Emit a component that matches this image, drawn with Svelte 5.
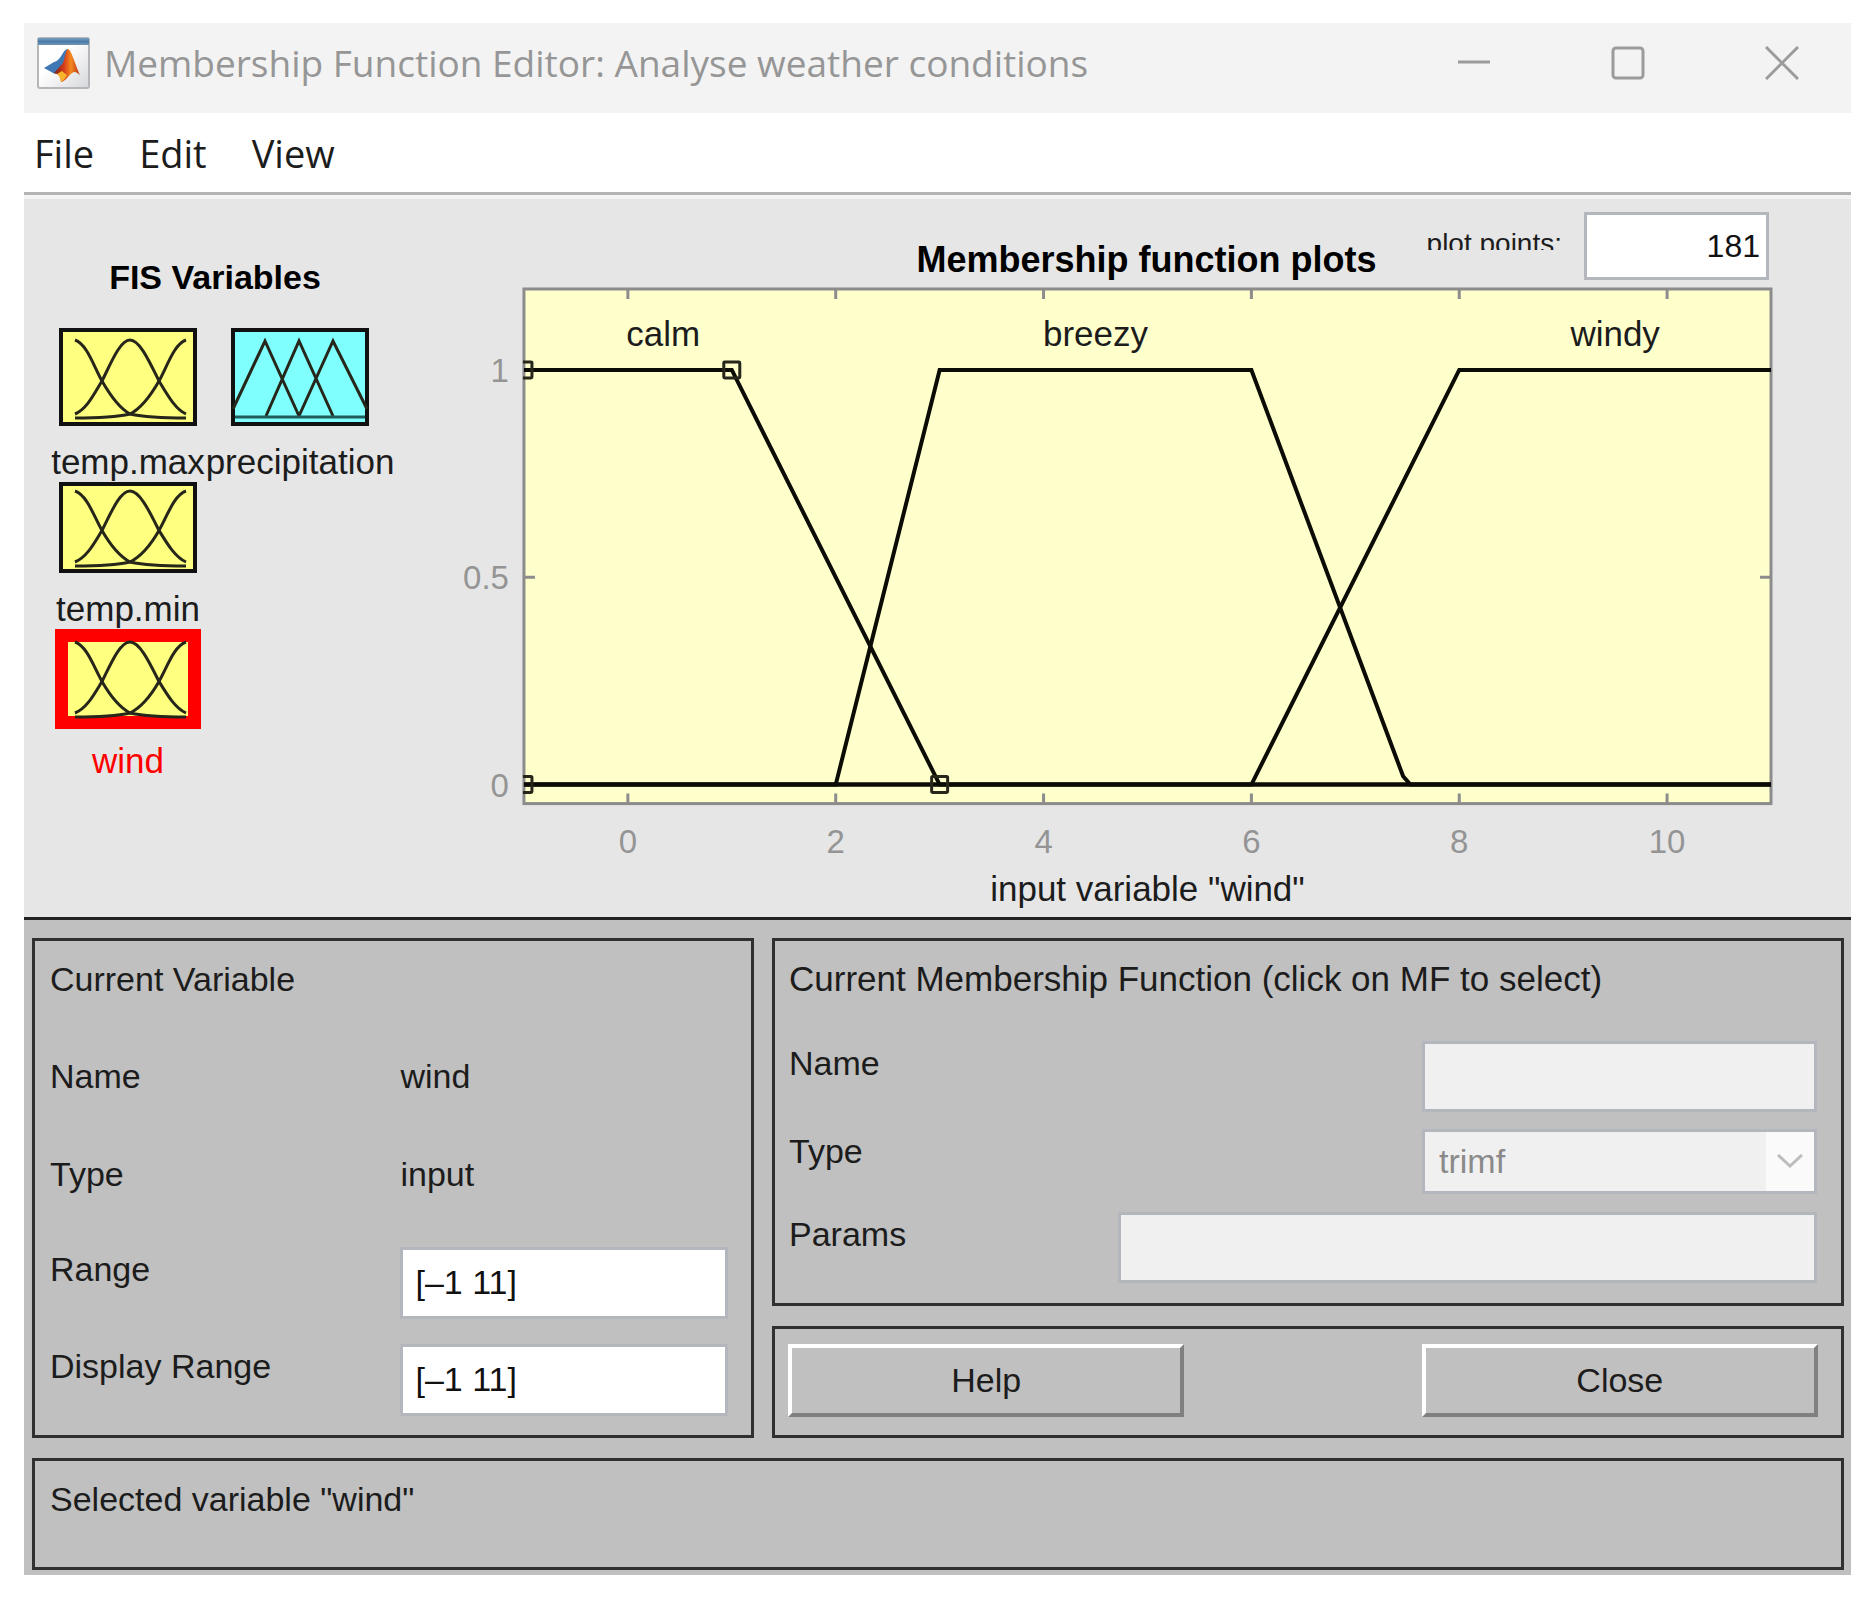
<script>
  const unit = 104;
  const left = 74;
  const px = (v) => left + unit * (v + 1);
  const py = (v) => 505 - 415 * v;
  const toPoints = (list) => list.map(([x, y]) => `${px(x)},${py(y)}`).join(' ');

  const functions = [
    { name: 'calm', at: 0.34, points: [[-1, 1], [1, 1], [3, 0], [11, 0]] },
    { name: 'breezy', at: 4.5, points: [[-1, 0], [2, 0], [3, 1], [6, 1], [7.46, 0.02], [7.53, 0], [11, 0]] },
    { name: 'windy', at: 9.5, points: [[-1, 0], [6, 0], [8, 1], [11, 1]] },
  ];
  const handles = [[-1, 1], [1, 1], [-1, 0], [3, 0]];
  const xTicks = [0, 2, 4, 6, 8, 10];
  const yTicks = [0, 0.5, 1];

  let plotPoints = $state('181');
  let range = $state('[–1 11]');
  let displayRange = $state('[–1 11]');
</script>

{#snippet bells(top, bottom)}
  {@const mid = (top + bottom) / 2 + 4}
  <g class="curve">
    <path d="M16 {top} C28 {top + 4} 35 {mid - 14} 43 {mid} S60 {bottom - 6} 71 {bottom} Q90 {bottom + 4} 127 {bottom + 4}" />
    <path d="M127 {top} C115 {top + 4} 108 {mid - 14} 100 {mid} S83 {bottom - 6} 71 {bottom} Q53 {bottom + 4} 16 {bottom + 4}" />
    <path d="M16 {bottom} C28 {bottom - 5} 35 {mid + 13} 43 {mid} C52 {mid - 18} 61 {top} 71 {top} S91 {mid - 18} 100 {mid} C108 {mid + 13} 116 {bottom - 5} 127 {bottom}" />
  </g>
{/snippet}

<main class="window">
  <header class="titlebar">
    <svg class="logo" viewBox="0 0 53 52" aria-hidden="true">
      <defs>
        <linearGradient id="paper" x1="0" y1="0" x2="1" y2="1">
          <stop offset="0.4" stop-color="#fff" />
          <stop offset="1" stop-color="#d6d7db" />
        </linearGradient>
        <linearGradient id="band" x1="0" y1="0" x2="0" y2="1">
          <stop offset="0" stop-color="#7ba0c0" />
          <stop offset="0.5" stop-color="#4a7aa5" />
          <stop offset="1" stop-color="#6f97b8" />
        </linearGradient>
        <linearGradient id="flame" x1="0" y1="0" x2="1" y2="0">
          <stop offset="0" stop-color="#7a1a10" />
          <stop offset="0.4" stop-color="#d8401a" />
          <stop offset="0.65" stop-color="#f58a1f" />
          <stop offset="1" stop-color="#b8321a" />
        </linearGradient>
      </defs>
      <rect x="1" y="1" width="51" height="50" rx="2" fill="url(#paper)" stroke="#b4b6ba" stroke-width="2" />
      <path d="M1 1h51v7H1z" fill="url(#band)" />
      <path d="M7 31l10-6c4-1 6-4 9-9 2-3 3-4 5-4l-5 16-8 9z" fill="#3f78b5" />
      <path d="M17 36l9-10c2-5 3-14 5-14 3 0 7 15 12 26-4-3-5-4-8-2-4 3-6 8-11 9 0-5-2-8-7-9z" fill="url(#flame)" />
      <path d="M24 45c-1-5-2-7-4-8l5-3c2 2 4 3 5 4-2 4-4 6-6 7z" fill="#f8b32c" />
    </svg>
    <h1>Membership Function Editor: Analyse weather conditions</h1>
    <div class="controls">
      <button aria-label="Minimize"><svg viewBox="0 0 34 34"><path d="M1 16h32" /></svg></button>
      <button aria-label="Maximize"><svg viewBox="0 0 34 34"><rect x="2" y="2" width="30" height="30" rx="3" /></svg></button>
      <button aria-label="Close window"><svg viewBox="0 0 34 34"><path d="M1 1l32 32M33 1L1 33" /></svg></button>
    </div>
  </header>

  <nav class="menu">
    <button>File</button>
    <button>Edit</button>
    <button>View</button>
  </nav>

  <section class="upper">
    <div class="variables">
      <h2>FIS Variables</h2>
      <div class="grid">
        <button class="variable">
          <svg class="tall" viewBox="0 0 138 98" aria-hidden="true">
            <rect class="box yellow" x="2" y="2" width="134" height="94" />
            {@render bells(12, 86)}
          </svg>
          <span>temp.max</span>
        </button>
        <button class="variable">
          <svg class="tall" viewBox="0 0 138 98" aria-hidden="true">
            <rect class="box cyan" x="2" y="2" width="134" height="94" />
            <g class="curve">
              <path d="M2 81L34 13L68 88M35 88L68 13L102 88M68 88L102 13L136 81" />
              <path class="base" d="M4 89h130" />
            </g>
          </svg>
          <span>precipitation</span>
        </button>
        <button class="variable first">
          <svg viewBox="0 0 138 91" aria-hidden="true">
            <rect class="box yellow" x="2" y="2" width="134" height="87" />
            {@render bells(9, 80)}
          </svg>
          <span>temp.min</span>
        </button>
        <button class="variable first selected">
          <svg viewBox="-4 -4 146 100" aria-hidden="true">
            <rect class="box yellow" x="2.5" y="2.5" width="133" height="87" />
            {@render bells(9, 80)}
          </svg>
          <span>wind</span>
        </button>
      </div>
    </div>

    <div class="plot">
      <div class="plot-head">
        <h2>Membership function plots</h2>
        <div class="points">
          <label for="points">plot points:</label>
          <input id="points" bind:value={plotPoints} />
        </div>
      </div>
      <svg class="chart" viewBox="0 0 1340 637" role="img" aria-label="Membership functions of wind">
        <clipPath id="area"><rect x="73" y="8" width="1250" height="517" /></clipPath>
        <rect class="area" x="74" y="9" width="1248" height="515" />
        {#each xTicks as t}
          <path class="tick" d="M{px(t)} 9v10M{px(t)} 524v-10" />
          <text class="num" x={px(t)} y="573" text-anchor="middle">{t}</text>
        {/each}
        <path class="tick" d="M74 {py(0.5)}h11M1322 {py(0.5)}h-11" />
        {#each yTicks as t}
          <text class="num" x="59" y={py(t) + 12} text-anchor="end">{t}</text>
        {/each}
        <g clip-path="url(#area)">
          {#each functions as f}
            <polyline class="line" points={toPoints(f.points)} />
          {/each}
          <path class="line" d="M74 505H1322" />
          {#each handles as [x, y]}
            <rect class="handle" x={px(x) - 8} y={py(y) - 8} width="16" height="16" rx="1" />
          {/each}
        </g>
        {#each functions as f}
          <text class="name" x={px(f.at)} y="66" text-anchor="middle">{f.name}</text>
        {/each}
        <text class="name" x="698" y="621" text-anchor="middle">input variable "wind"</text>
      </svg>
    </div>
  </section>

  <section class="lower">
    <div class="panels">
      <section class="panel current">
        <h3>Current Variable</h3>
        <span class="key">Name</span><span class="key">wind</span>
        <span class="key">Type</span><span class="key">input</span>
        <label for="range">Range</label>
        <input id="range" bind:value={range} />
        <label for="display">Display Range</label>
        <input id="display" bind:value={displayRange} />
      </section>

      <div class="column">
        <section class="panel function">
          <h3>Current Membership Function (click on MF to select)</h3>
          <label for="mf-name">Name</label>
          <input id="mf-name" class="narrow" disabled />
          <label for="mf-type">Type</label>
          <div class="select narrow">
            <select id="mf-type" disabled><option>trimf</option></select>
            <svg viewBox="0 0 26 14" aria-hidden="true"><path d="M1 1l12 11L25 1" /></svg>
          </div>
          <label for="mf-params">Params</label>
          <input id="mf-params" class="wide" disabled />
        </section>
        <section class="panel actions">
          <button>Help</button>
          <button class="last">Close</button>
        </section>
      </div>
    </div>
    <p class="panel status" role="status">Selected variable "wind"</p>
  </section>
</main>

<style>
  :global(body) {
    background: #fff;
  }

  * {
    box-sizing: border-box;
  }

  .window {
    margin: 23px 18px 22px 24px;
    font: 34px/40px "Liberation Sans", Arial, sans-serif;
    color: #1c1c1c;
  }

  h1, h2, h3, p {
    margin: 0;
    font-size: inherit;
    font-weight: inherit;
  }

  button, input, select {
    margin: 0;
    font: inherit;
    color: inherit;
  }

  button {
    padding: 0;
    border: 0;
    background: none;
  }

  .titlebar {
    display: flex;
    align-items: center;
    height: 90px;
    padding: 0 0 10px 13px;
    background: #f3f3f3;
    color: #969696;
    font-family: "Open Sans", "Noto Sans", sans-serif;
  }

  .logo {
    width: 53px;
    height: 52px;
    margin-right: 14px;
  }

  h1 {
    font-size: 37px;
    white-space: nowrap;
  }

  .controls {
    display: flex;
    gap: 16px;
    margin-left: auto;
  }

  .controls button {
    display: grid;
    place-items: center;
    width: 138px;
    height: 80px;
  }

  .controls svg {
    width: 34px;
    height: 34px;
    fill: none;
    stroke: #9b9b9b;
    stroke-width: 3;
  }

  .menu {
    display: flex;
    align-items: center;
    gap: 45px;
    height: 82px;
    padding-left: 10px;
    border-bottom: 3px solid #b4b4b4;
    font-family: "Open Sans", "Noto Sans", sans-serif;
    font-size: 38px;
  }

  .upper {
    display: flex;
    padding-right: 62px;
    border-top: 4px solid #f4f4f4;
    border-bottom: 3px solid #222;
    background: #e6e6e6;
  }

  .variables {
    flex: none;
    width: 426px;
    padding: 58px 0 0 35px;
  }

  h2 {
    font-weight: bold;
    color: #000;
  }

  .variables h2 {
    width: 312px;
    margin-bottom: 31px;
    text-align: center;
  }

  .grid {
    display: grid;
    grid-template-columns: 138px 138px;
    gap: 2px 34px;
  }

  .first {
    grid-column: 1;
  }

  .variable {
    display: flex;
    flex-direction: column;
    align-items: center;
    gap: 18px;
    font-size: 35px;
    line-height: 36px;
    white-space: nowrap;
  }

  .variable svg {
    flex: none;
    width: 138px;
    height: 91px;
  }

  .variable .tall {
    height: 98px;
  }

  .box {
    stroke: #111;
    stroke-width: 4;
  }

  .yellow {
    fill: #ffff80;
  }

  .cyan {
    fill: #80ffff;
  }

  .curve {
    fill: none;
    stroke: #26261a;
    stroke-width: 3;
  }

  .base {
    stroke: #1f5c5c;
  }

  .selected {
    gap: 14px;
    color: #f00;
  }

  .selected svg {
    width: 146px;
    height: 100px;
  }

  .selected .box {
    stroke: #f00;
    stroke-width: 13;
  }

  .plot {
    flex: 1;
    min-width: 0;
    padding-top: 13px;
  }

  .plot-head {
    display: grid;
    grid-template-columns: 1fr auto 1fr;
    padding: 0 20px 0 74px;
  }

  .plot-head h2 {
    grid-column: 2;
    align-self: end;
    font-size: 36px;
  }

  .points {
    display: flex;
    justify-content: flex-end;
    gap: 22px;
  }

  .points label {
    height: 20px;
    margin-top: 18px;
    overflow: hidden;
    font-size: 28px;
    line-height: 24px;
    white-space: nowrap;
  }

  input {
    width: 100%;
    min-width: 0;
    height: 72px;
    padding: 0 12px;
    border: 3px solid #b4b6bd;
    border-radius: 0;
    background: #fff;
    color: #111;
  }

  input:disabled {
    background: #f0f0f0;
  }

  .points input {
    width: 185px;
    height: 68px;
    padding: 0 6px;
    font-size: 32px;
    text-align: right;
  }

  .chart {
    display: block;
    width: 100%;
    height: auto;
  }

  .area {
    fill: #ffffcc;
    stroke: #8c8c8c;
    stroke-width: 3;
  }

  .tick {
    stroke: #8c8c8c;
    stroke-width: 3;
  }

  .num {
    font-size: 33px;
    fill: #949494;
  }

  .name {
    font-size: 35px;
    fill: #1c1c1c;
  }

  .line {
    fill: none;
    stroke: #0c0c06;
    stroke-width: 4;
  }

  .handle {
    fill: none;
    stroke: #26261a;
    stroke-width: 3;
  }

  .lower {
    display: flex;
    flex-direction: column;
    gap: 20px;
    padding: 18px 7px 5px 8px;
    background: #c0c0c0;
  }

  .panels {
    display: grid;
    grid-template-columns: 722fr 1072fr;
    gap: 18px;
  }

  .column {
    display: flex;
    flex-direction: column;
    gap: 20px;
    min-width: 0;
  }

  .panel {
    border: 3px solid #303030;
  }

  h3 {
    grid-column: 1 / -1;
    white-space: nowrap;
  }

  .current {
    display: grid;
    grid-template-columns: 351fr 328fr;
    grid-template-rows: 97px 98px 93px 97px auto;
    padding: 18px 23px 19px 15px;
  }

  label {
    padding-top: 2px;
  }

  .function {
    display: grid;
    grid-template-columns: 329fr 304fr 395fr;
    grid-template-rows: 82px 88px 83px auto;
    padding: 18px 24px 20px 14px;
  }

  .function input {
    height: 71px;
  }

  .function label {
    grid-column: 1;
  }

  .function h3 {
    font-size: 35px;
  }

  .narrow {
    grid-column: 3;
  }

  .wide {
    grid-column: 2 / -1;
  }

  .select {
    display: grid;
    grid-template-columns: 1fr 48px;
    align-items: center;
    height: 65px;
    border: 3px solid #b4b6bd;
    background: linear-gradient(#fafafa, #fafafa) right / 48px 100% no-repeat #f0f0f0;
  }

  select {
    grid-area: 1 / 1 / 2 / 3;
    width: 100%;
    height: 100%;
    padding: 0 14px;
    border: 0;
    background: none;
    appearance: none;
  }

  select:disabled {
    color: #8a8a8a;
    opacity: 1;
  }

  .select svg {
    grid-area: 1 / 2;
    justify-self: center;
    width: 26px;
    height: 14px;
    fill: none;
    stroke: #bdbdbd;
    stroke-width: 3;
  }

  .actions {
    display: grid;
    grid-template-columns: 396fr 237fr 396fr;
    padding: 15px 23px 18px 13px;
  }

  .actions button {
    height: 73px;
    border: 4px solid;
    border-color: #fff #808080 #808080 #fff;
  }

  .last {
    grid-column: 3;
  }

  .status {
    height: 112px;
    padding: 18px 15px;
  }
</style>
